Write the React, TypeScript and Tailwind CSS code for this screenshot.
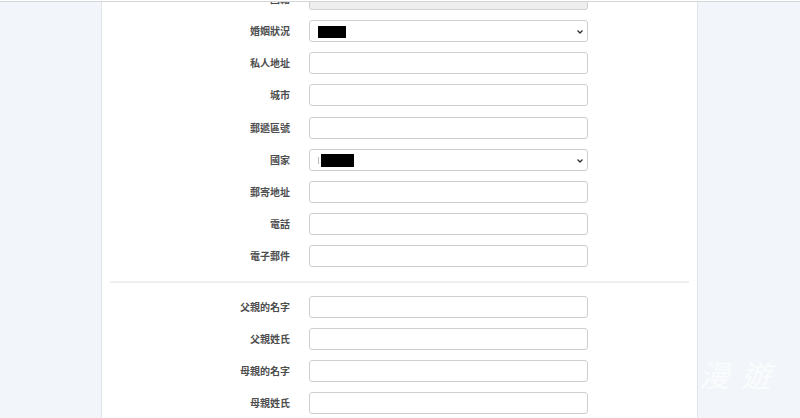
import React from "react";

const font = { fontFamily: '"Noto Sans CJK TC", "Noto Sans", sans-serif' };

function Chevron() {
  return (
    <svg width="8" height="6" viewBox="0 0 8 6" className="absolute right-[3px] top-[8px]">
      <path d="M1.5 1.5 L4 4 L6.5 1.5" stroke="#333" strokeWidth="1.3" fill="none" />
    </svg>
  );
}

function Row({ label, kind, box }: { label: string; kind?: "select" | "input" | "disabled"; box?: { l: number; w: number; t: number; h: number; mark?: boolean } }) {
  return (
    <div className="flex items-center h-[22px]">
      <div className="w-[180px] text-right text-[10px] font-semibold text-[#4d4d4d] leading-none">{label}</div>
      <div
        className={
          "relative ml-[19px] w-[279px] h-[22px] rounded-[3px] border border-[#cfcfcf] " +
          (kind === "disabled" ? "bg-[#eeeeee]" : "bg-white")
        }
      >
        {box && (
          <div className="absolute bg-black" style={{ left: box.l, width: box.w, top: box.t, height: box.h }} />
        )}
        {box?.mark && <div className="absolute left-[8px] top-[7px] w-[1px] h-[7px] bg-[#bbb]" />}
        {kind === "select" && <Chevron />}
      </div>
    </div>
  );
}

export default function App() {
  return (
    <div className="w-[800px] h-[418px] overflow-hidden bg-[#f2f6fa] relative" style={font}>
      <div className="h-[1px] bg-white" />
      <div className="h-[1px] bg-[#d4d6d9]" />
      <div className="flex h-[416px]">
        <div className="w-[101px] shrink-0" />
        <div className="w-[597px] shrink-0 bg-white border-l border-r border-[#dfe4ea] px-[8px] overflow-hidden">
          <div className="mt-[-14px] flex flex-col gap-[10.14px]">
            <Row label="國籍" kind="disabled" />
            <Row label="婚姻狀況" kind="select" box={{ l: 8, w: 28, t: 5, h: 12 }} />
            <Row label="私人地址" />
            <Row label="城市" />
            <Row label="郵遞區號" />
            <Row label="國家" kind="select" box={{ l: 11, w: 33, t: 4, h: 13, mark: true }} />
            <Row label="郵寄地址" />
            <Row label="電話" />
            <Row label="電子郵件" />
          </div>
          <div className="mt-[14px] h-[2px] bg-[#efefef]" />
          <div className="mt-[13px] flex flex-col gap-[10.14px]">
            <Row label="父親的名字" />
            <Row label="父親姓氏" />
            <Row label="母親的名字" />
            <Row label="母親姓氏" />
          </div>
        </div>
        <div className="flex-1" />
      </div>
      <div
        className="absolute left-[699px] top-[352px] text-[30px] text-white opacity-70 tracking-[12px] italic"
        style={{ fontFamily: '"Noto Sans CJK TC", serif' }}
      >
        漫遊
      </div>
    </div>
  );
}
